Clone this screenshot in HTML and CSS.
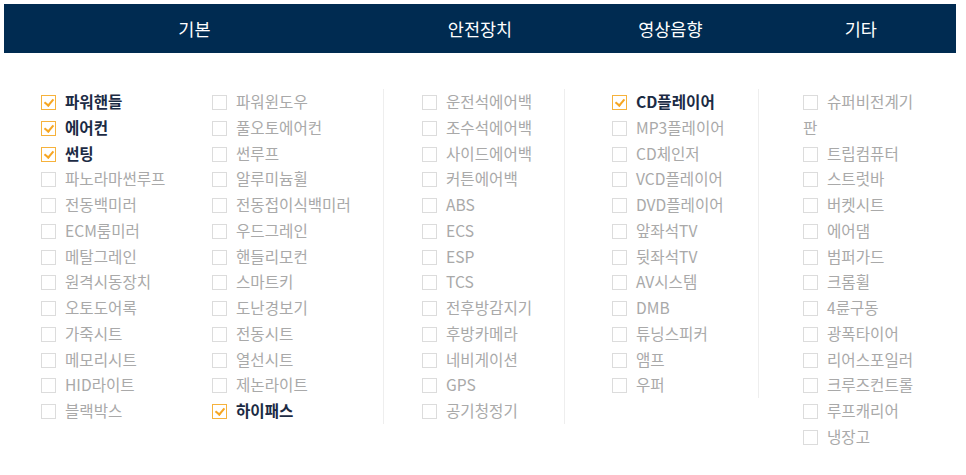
FILE: index.html
```html
<!DOCTYPE html>
<html lang="ko">
<head>
  <meta charset="UTF-8" />
  <meta name="viewport" content="width=device-width, initial-scale=1.0"/>
  <title>차량 옵션</title>
  <link rel="stylesheet" href="styles.css">
</head>
<body>

  <div class="options">
    <div class="tabs">
      <div class="tab wide">기본</div>
      <div class="tab">안전장치</div>
      <div class="tab">영상음향</div>
      <div class="tab">기타</div>
    </div>

    <div class="groups">
      <div class="group basic">
        <ul class="col">
          <li class="on"><span class="box"></span>파워핸들</li>
          <li class="on"><span class="box"></span>에어컨</li>
          <li class="on"><span class="box"></span>썬팅</li>
          <li><span class="box"></span>파노라마썬루프</li>
          <li><span class="box"></span>전동백미러</li>
          <li><span class="box"></span>ECM룸미러</li>
          <li><span class="box"></span>메탈그레인</li>
          <li><span class="box"></span>원격시동장치</li>
          <li><span class="box"></span>오토도어록</li>
          <li><span class="box"></span>가죽시트</li>
          <li><span class="box"></span>메모리시트</li>
          <li><span class="box"></span>HID라이트</li>
          <li><span class="box"></span>블랙박스</li>
        </ul>
        <ul class="col">
          <li><span class="box"></span>파워윈도우</li>
          <li><span class="box"></span>풀오토에어컨</li>
          <li><span class="box"></span>썬루프</li>
          <li><span class="box"></span>알루미늄휠</li>
          <li><span class="box"></span>전동접이식백미러</li>
          <li><span class="box"></span>우드그레인</li>
          <li><span class="box"></span>핸들리모컨</li>
          <li><span class="box"></span>스마트키</li>
          <li><span class="box"></span>도난경보기</li>
          <li><span class="box"></span>전동시트</li>
          <li><span class="box"></span>열선시트</li>
          <li><span class="box"></span>제논라이트</li>
          <li class="on"><span class="box"></span>하이패스</li>
        </ul>
      </div>

      <div class="group safety">
        <ul class="col">
          <li><span class="box"></span>운전석에어백</li>
          <li><span class="box"></span>조수석에어백</li>
          <li><span class="box"></span>사이드에어백</li>
          <li><span class="box"></span>커튼에어백</li>
          <li><span class="box"></span>ABS</li>
          <li><span class="box"></span>ECS</li>
          <li><span class="box"></span>ESP</li>
          <li><span class="box"></span>TCS</li>
          <li><span class="box"></span>전후방감지기</li>
          <li><span class="box"></span>후방카메라</li>
          <li><span class="box"></span>네비게이션</li>
          <li><span class="box"></span>GPS</li>
          <li><span class="box"></span>공기청정기</li>
        </ul>
      </div>

      <div class="group av">
        <ul class="col">
          <li class="on"><span class="box"></span>CD플레이어</li>
          <li><span class="box"></span>MP3플레이어</li>
          <li><span class="box"></span>CD체인저</li>
          <li><span class="box"></span>VCD플레이어</li>
          <li><span class="box"></span>DVD플레이어</li>
          <li><span class="box"></span>앞좌석TV</li>
          <li><span class="box"></span>뒷좌석TV</li>
          <li><span class="box"></span>AV시스템</li>
          <li><span class="box"></span>DMB</li>
          <li><span class="box"></span>튜닝스피커</li>
          <li><span class="box"></span>앰프</li>
          <li><span class="box"></span>우퍼</li>
        </ul>
      </div>

      <div class="group misc">
        <ul class="col">
          <li><span class="box"></span>슈퍼비전계기판</li>
          <li><span class="box"></span>트립컴퓨터</li>
          <li><span class="box"></span>스트럿바</li>
          <li><span class="box"></span>버켓시트</li>
          <li><span class="box"></span>에어댐</li>
          <li><span class="box"></span>범퍼가드</li>
          <li><span class="box"></span>크롬휠</li>
          <li><span class="box"></span>4륜구동</li>
          <li><span class="box"></span>광폭타이어</li>
          <li><span class="box"></span>리어스포일러</li>
          <li><span class="box"></span>크루즈컨트롤</li>
          <li><span class="box"></span>루프캐리어</li>
          <li><span class="box"></span>냉장고</li>
        </ul>
      </div>
    </div>
  </div>

</body>
</html>
```

FILE: styles.css
```css
body {
  margin: 0;
  padding: 4px;
  font-family: "Noto Sans CJK KR", "Noto Sans", sans-serif;
  background: #fff;
}

.options {
  width: 952px;
}

.tabs {
  display: flex;
  height: 49px;
  background: #002b51;
  color: #fff;
  font-size: 17.5px;
}

.tab {
  width: 20%;
  display: flex;
  align-items: center;
  justify-content: center;
}

.tab.wide {
  width: 40%;
}

.groups {
  display: flex;
  align-items: flex-start;
  margin-top: 36px;
}

.group {
  display: flex;
  border-right: 1px solid #eeeeee;
}

.basic {
  width: 342px;
  padding-left: 37px;
}

.basic .col {
  width: 171px;
}

.safety {
  width: 142px;
  padding-left: 38px;
}

.av {
  width: 146px;
  padding-left: 47px;
}

.misc {
  border-right: none;
  padding-left: 44px;
}

.misc .col {
  width: 121px;
}

.col {
  list-style: none;
  margin: 0;
  padding: 0;
}

.col li {
  font-size: 15.6px;
  line-height: 25.75px;
  color: #a9a9a9;
}

.box {
  display: inline-block;
  width: 13px;
  height: 13px;
  border: 1px solid #dcdcdc;
  margin-right: 9px;
  vertical-align: -2px;
  position: relative;
}

.col li.on {
  color: #1c2b44;
  font-weight: bold;
}

.on .box {
  border-color: #f6b23c;
}

.on .box::after {
  content: "";
  position: absolute;
  left: 4px;
  top: 1px;
  width: 4px;
  height: 7px;
  border-right: 2px solid #f6a623;
  border-bottom: 2px solid #f6a623;
  transform: rotate(40deg);
}
```
